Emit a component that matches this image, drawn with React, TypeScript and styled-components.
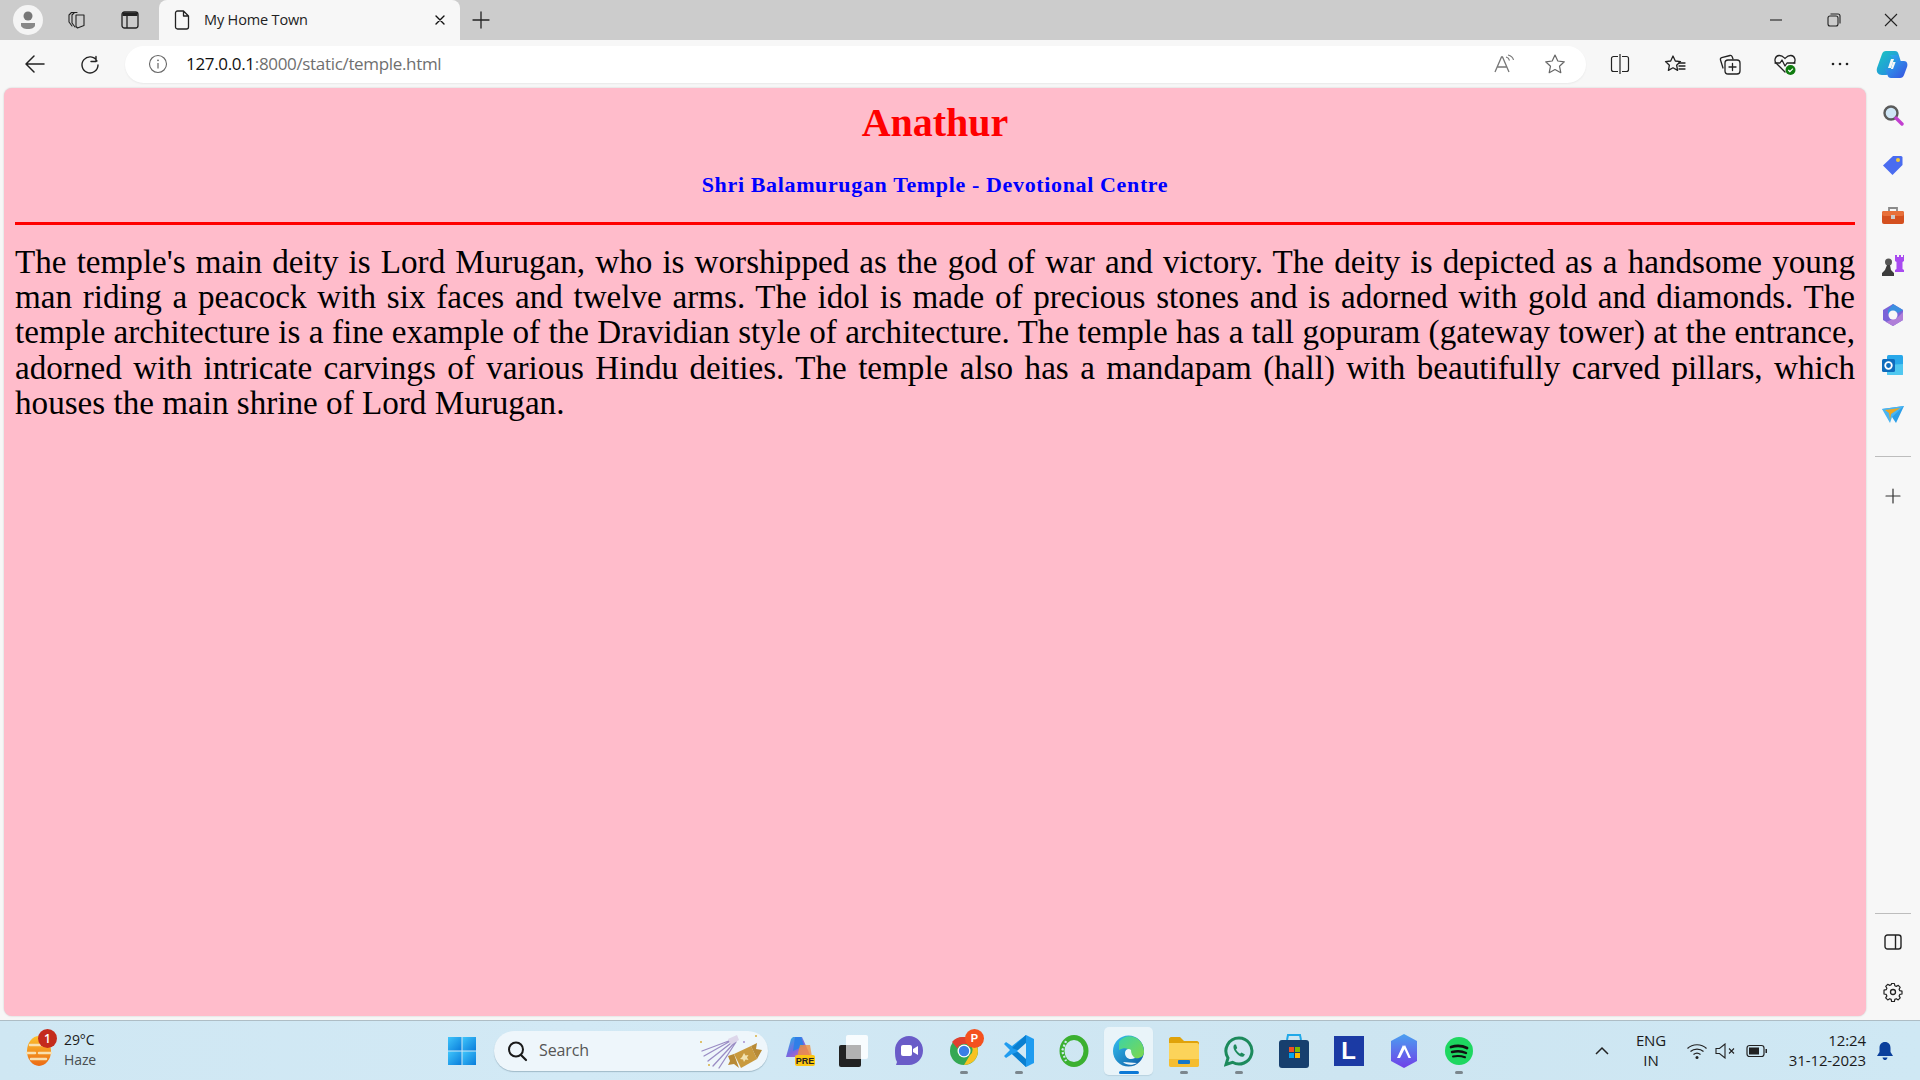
import React from "react";
import styled, { createGlobalStyle } from "styled-components";

const Global = createGlobalStyle`
  html, body { margin: 0; padding: 0; width: 1920px; height: 1080px; overflow: hidden; background: #f7f7f7; }
  #root { width: 1920px; height: 1080px; }
  * { box-sizing: border-box; }
`;
const UI = `"Open Sans", "Noto Sans", sans-serif`;

const Screen = styled.div`
  width: 1920px; height: 1080px; display: flex; flex-direction: column; font-family: ${UI}; color: #1b1b1b;
`;
const TabStrip = styled.div`
  height: 40px; background: #cccccc; display: flex; align-items: center; flex: none;
`;
const StripButton = styled.div<{ $w: number; $pl?: number }>`
  width: ${p => p.$w}px; height: 40px; padding-left: ${p => p.$pl ?? 0}px; display: flex; align-items: center; justify-content: center; flex: none;
`;
const Avatar = styled.div`
  width: 30px; height: 30px; border-radius: 50%; background: #f4f4f4; display: flex; align-items: center; justify-content: center;
`;
const Tab = styled.div`
  width: 301px; height: 40px; margin-left: 3px; background: #f7f7f7; border-radius: 8px 8px 0 0; display: flex; align-items: center;
  padding: 0 14px 0 15px; flex: none; font-size: 14.5px; letter-spacing: -0.15px;
`;
const TabTitle = styled.span`
  margin: 0 0 2px 14px; flex: 1; color: #222;
`;
const Spacer = styled.div`flex: 1;`;
const WindowButton = styled.div`
  width: 57.5px; height: 40px; display: flex; align-items: center; justify-content: center; flex: none;
`;
const ToolBar = styled.div`
  height: 48px; background: #f7f7f7; display: flex; align-items: center; flex: none; padding-left: 7px;
`;
const ToolButton = styled.div<{ $w?: number }>`
  width: ${p => p.$w ?? 55}px; height: 40px; display: flex; align-items: center; justify-content: center; flex: none;
`;
const AddressBar = styled.div`
  width: 1461px; height: 37px; margin-left: 8px; margin-right: 6px; background: #fff; border-radius: 19px; display: flex; align-items: center;
  padding: 0 6px 0 23px; box-shadow: 0 1px 2px rgba(0,0,0,.06); flex: none;
`;
const Url = styled.div`
  margin: 0 0 2px 18px; font-size: 17px; letter-spacing: -0.33px; color: #6f6f6f; flex: 1;
`;
const UrlHost = styled.span`color: #111;`;
const Middle = styled.div`
  flex: 1; display: flex; min-height: 0; padding-left: 4px;
`;
const Page = styled.main`
  width: 1862px; height: 928px; background: #ffbccb; border-radius: 8px; padding: 0 11px; flex: none; box-shadow: 0 0 2px rgba(0,0,0,.2);
  font-family: "Liberation Serif", "Times New Roman", serif; color: #000; overflow: hidden;
`;
const Heading = styled.h1`
  margin: 13px 0 0; font-size: 40px; line-height: 44px; font-weight: bold; color: #ff0000; text-align: center;
`;
const SubHeading = styled.h2`
  margin: 27px 0 0; font-size: 22px; line-height: 26px; font-weight: bold; color: #0000ff; text-align: center; letter-spacing: 0.64px;
`;
const Rule = styled.hr`
  margin: 24px 0 0; border: 0; height: 3px; background: #ff0000;
`;
const Body = styled.p`
  margin: 19px 0 0; font-size: 33.15px; line-height: 35.2px; text-align: justify;
`;
const SideBar = styled.aside`
  width: 54px; flex: none; display: flex; flex-direction: column; align-items: center; padding: 2px 1px 0 0; height: 929px;
`;
const SideItem = styled.div`
  width: 53px; height: 50px; display: flex; align-items: center; justify-content: center; flex: none;
`;
const SideRule = styled.div`
  width: 36px; height: 1px; background: #bdbdbd; flex: none; margin: 16px 0 31px;
`;
const SideFill = styled.div`flex: 1;`;
const SideRuleLow = styled(SideRule)`margin: 0 0 3px;`;
const TaskBar = styled.footer`
  height: 60px; flex: none; display: flex; align-items: center; position: relative;
  background: linear-gradient(90deg, #cfe7f3 0%, #d2e9f5 30%, #cde5f1 70%, #cfe8f4 100%);
  border-top: 1px solid #aebdc5;
`;
const Weather = styled.div`
  width: 434px; padding-left: 26px; display: flex; align-items: center; flex: none; position: relative; height: 40px;
`;
const Badge = styled.div`
  position: absolute; left: 38px; top: -2px; width: 19px; height: 19px; border-radius: 50%; background: #c42b1c; color: #fff; font-size: 12px;
  font-weight: 600; display: flex; align-items: center; justify-content: center;
`;
const WeatherText = styled.div`
  margin: 0 0 2px 12px; font-size: 14px; line-height: 20px; letter-spacing: -0.1px;
`;
const WeatherSub = styled.div`color: #4a4f52;`;
const StartButton = styled.div`
  width: 55px; height: 48px; display: flex; align-items: center; justify-content: center; flex: none;
`;
const SearchBox = styled.div`
  width: 274px; height: 40px; border-radius: 20px; background: #eef6fb; margin-left: 5px; display: flex; align-items: center; padding: 0 4px 0 12px;
  box-shadow: 0 1px 1px rgba(70,100,120,.35); flex: none; font-size: 16px; color: #555; letter-spacing: -0.1px;
`;
const SearchLabel = styled.span`margin: 0 0 1px 11px; flex: 1;`;
const Apps = styled.div`
  display: flex; align-items: center; margin-left: 3px; flex: none;
`;
const AppSlot = styled.div`
  width: 55px; height: 48px; display: flex; align-items: center; justify-content: center; position: relative; flex: none;
`;
const ActiveSlot = styled(AppSlot)`
  width: 49px; margin: 0 3px; border-radius: 5px; background: rgba(255,255,255,.55); box-shadow: 0 1px 1px rgba(70,100,120,.15);
`;
const AppDot = styled.div<{ $active?: boolean }>`
  position: absolute; bottom: 1px; left: 50%; transform: translateX(-50%); height: 3px; border-radius: 2px;
  width: ${p => (p.$active ? 20 : 8)}px; background: ${p => (p.$active ? "#0b78d6" : "#7b868d")};
`;
const AppBadge = styled.div`
  position: absolute; left: 29px; top: 2px; width: 19px; height: 19px; border-radius: 50%; background: #f4511e; color: #fff;
  font: bold 11px "Liberation Sans", sans-serif; display: flex; align-items: center; justify-content: center;
`;
const Tray = styled.div`
  margin-left: auto; display: flex; align-items: center; flex: none; height: 100%;
`;
const Chevron = styled.div`width: 24px; display: flex; justify-content: center; margin-right: 14px;`;
const Lang = styled.div`
  width: 46px; text-align: center; font-size: 15px; line-height: 20px; margin: 0 9px 2px 0; letter-spacing: -0.1px;
`;
const TrayIcon = styled.div<{ $w: number }>`
  width: ${p => p.$w}px; display: flex; justify-content: center; flex: none;
`;
const Clock = styled.div`
  margin: 0 0 2px 13px; text-align: right; font-size: 15px; line-height: 20px; width: 80px; letter-spacing: -0.1px; white-space: nowrap;
`;
const Bell = styled.div`width: 38px; display: flex; justify-content: center; margin-right: 16px;`;

const s = { fill: "none", stroke: "#222", strokeWidth: 1.3, strokeLinecap: "round" as const, strokeLinejoin: "round" as const };

const Ico = ({ w = 20, h = 20, vb, children }: { w?: number; h?: number; vb?: string; children: React.ReactNode }) => (
  <svg width={w} height={h} viewBox={vb ?? `0 0 ${w} ${h}`}>{children}</svg>
);

const gearPath = "M8.6 1.5h2.8l.4 2.2 1.5.7 2-1.1 1.9 2-1.1 1.9.7 1.5 2.2.5v2.8l-2.2.4-.7 1.5 1.1 2-2 2-1.9-1.2-1.5.7-.4 2.2H8.6l-.4-2.2-1.5-.7-2 1.2-2-2 1.2-2-.7-1.5-2.2-.4V8.200l2.2-.5.7-1.500-1.200-1.900 2-2 2 1.100 1.500-.7z";

function MiniSearch() {
  return <Ico w={22} h={22}><circle cx="9" cy="9" r="6.5" fill="#cfe6f6" stroke="#5b5b5b" strokeWidth="2.4" /><path d="M14 14l6 6" stroke="#c23fd0" strokeWidth="3.4" strokeLinecap="round" /></Ico>;
}
function MiniTag() {
  return <Ico w={22} h={22}><path d="M11 2h8a1.500 1.500 0 0 1 1.500 1.500V11L10.500 21 1 11.500z" fill="#4a6cf0" /><circle cx="16" cy="6" r="2" fill="#f3c93a" /></Ico>;
}
function MiniBox() {
  return <Ico w={24} h={20}><path d="M8 6V3h8v3" fill="none" stroke="#8a8a8a" strokeWidth="1.800" /><rect x="1" y="6" width="22" height="13" rx="2" fill="#d4501f" /><rect x="1" y="6" width="22" height="5" rx="2" fill="#e8703a" /><rect x="10" y="10" width="4" height="4" fill="#ccc" /></Ico>;
}
function MiniChess() {
  return <Ico w={24} h={24}><path d="M14 2h2v2h2V2h2v2h2V2h1v6l-1.500 1v7l1.500 1v2h-9v-2l1.500-1V9L14 8z" fill="#a84af0" /><circle cx="7.500" cy="9" r="3.500" fill="#555" /><path d="M6 12h3l1 5 3 3v3H1v-3l3-3z" fill="#3c3c3c" /></Ico>;
}
function MiniM365() {
  return <Ico w={22} h={24}><path d="M11 1l10 6v10l-10 6L1 17V7z" fill="#7a63d8" /><path d="M11 1l10 6-5 3-5-2-5 3V7z" fill="#3c8fe0" /><path d="M21 17l-10 6-7-4 7-3 5-2 5-5z" fill="#b07ed8" /><circle cx="11" cy="12" r="4.500" fill="#f7f7f7" /></Ico>;
}
function MiniOutlook() {
  return <Ico w={22} h={22}><rect x="5" y="1" width="16" height="20" rx="1.500" fill="#28a8ea" /><path d="M5 11l16-1v10a1 1 0 0 1-1 1H6a1 1 0 0 1-1-1z" fill="#50c8f0" /><rect x="0" y="5" width="13" height="13" rx="1.500" fill="#0f6cbd" /><circle cx="6.500" cy="11.500" r="3.300" fill="none" stroke="#fff" strokeWidth="1.800" /></Ico>;
}
function MiniSend() {
  return <Ico w={22} h={18}><path d="M0 3l22-3-8 17-4-6z" fill="#2c9fe8" /><path d="M0 3l22-3-12 11-2 6z" fill="#4ab5f2" /><path d="M3 4l15-2L9 8l-1 6-1-7z" fill="#eea620" /></Ico>;
}
function Copilot() {
  return <Ico w={32} h={30}><defs><linearGradient id="cpa" x1="0" y1="0" x2="1" y2="1"><stop offset="0" stopColor="#19c8c0" /><stop offset="1" stopColor="#2a7fe8" /></linearGradient><linearGradient id="cpb" x1="0" y1="0" x2="1" y2="1"><stop offset="0" stopColor="#26b8ee" /><stop offset="1" stopColor="#3a4fe0" /></linearGradient></defs><path d="M10 2h9c2 0 3 1 3.500 3L25 13h-8l-3 10c-.7 2-2 3-4 3H6C2 26 0 23 1 19L6 5c.7-2 2-3 4-3z" fill="url(#cpa)" /><path d="M14 6h8l2 6h4c3 0 4 3 3 6l-3 8c-.7 2-2 3-4 3h-9c-2 0-3-1-3.500-3L9 20h8l3-8z" fill="url(#cpb)" /><path d="M18 10l-3 9h-3l3-9z" fill="#f7f7f7" /></Ico>;
}
function Win11() {
  return <Ico w={28} h={28}><defs><linearGradient id="wa" x1="0" y1="0" x2="1" y2="1"><stop offset="0" stopColor="#3fc5fb" /><stop offset="1" stopColor="#0a7ddb" /></linearGradient></defs><rect x="0" y="0" width="13.500" height="13.500" fill="url(#wa)" /><rect x="14.500" y="0" width="13.500" height="13.500" fill="url(#wa)" /><rect x="0" y="14.500" width="13.500" height="13.500" fill="url(#wa)" /><rect x="14.500" y="14.500" width="13.500" height="13.500" fill="url(#wa)" /></Ico>;
}
function Popper() {
  return <Ico w={66} h={36}><g stroke="#9a8cc4" strokeWidth="1.300" strokeLinecap="round"><path d="M36 6L4 18M36 6L6 23M37 7L10 28M38 8L15 33M38 9L21 35" /></g><path d="M30 6l9-4 2 5-8 5z" fill="#ddd6ea" /><path d="M36 21l17-8 6 13-16 9z" fill="#c99a3e" /><path d="M53 13l6-3-1 6 6 1-5 9zM36 21l-6 2 2 5-2 4 6-1 5 4z" fill="#b88a35" /><path d="M46 20l1.500 2.500 3-.5-1.500 2.500 1.500 2.500-3-.5-1.500 2.500-1-2.500-3-.5 2-2z" fill="#f2e3b0" /><circle cx="3" cy="9" r="1" fill="#d8b040" /><circle cx="11" cy="32" r="1" fill="#d8b040" /><circle cx="46" cy="9" r="1" fill="#a78fd0" /><circle cx="58" cy="3" r="1" fill="#d8b040" /></Ico>;
}
function PreIcon() {
  return <Ico w={32} h={32}><defs><linearGradient id="pa" x1="0" y1="0" x2="1" y2="1"><stop offset="0" stopColor="#1fb6e8" /><stop offset=".5" stopColor="#7a66e0" /><stop offset="1" stopColor="#f26aa8" /></linearGradient></defs><path d="M10 2h9l9 20H3L8 4z" fill="url(#pa)" /><path d="M12 2h6l3 9-11 5z" fill="#2f7fe8" /><path d="M17 10h10l2 12H14z" fill="#f09040" opacity=".8" /><rect x="12" y="20" width="20" height="11" rx="2" fill="#fbc613" /><text x="22" y="29" textAnchor="middle" fontSize="9" fontWeight="700" fontFamily="Liberation Sans, sans-serif" fill="#222">PRE</text></Ico>;
}
function TaskView() {
  return <Ico w={30} h={32}><rect x="0" y="10" width="22" height="22" rx="2" fill="#222" /><rect x="7" y="0" width="22" height="24" rx="2" fill="#fff" opacity=".85" /><rect x="7" y="10" width="15" height="14" fill="#aaa" opacity=".85" /></Ico>;
}
function Meet() {
  return <Ico w={30} h={32}><path d="M15 1c8 0 14 6.500 14 14.500S23 30 15 30H2l1-3C1 24 1 19 1 15.500 1 7.500 7 1 15 1z" fill="#6a5cc8" /><rect x="7" y="10" width="11" height="11" rx="2" fill="#fff" /><path d="M19 14l5-3v9l-5-3z" fill="#fff" /></Ico>;
}
function Chrome() {
  return <Ico w={30} h={30}><circle cx="15" cy="15" r="14" fill="#34a853" /><path d="M15 1a14 14 0 0 1 12.100 7H15a7 7 0 0 0-6.500 4.500L3 6A14 14 0 0 1 15 1z" fill="#e0402f" /><path d="M27.100 8A14 14 0 0 1 15 29l6-10a7 7 0 0 0 0-11z" fill="#f8c223" /><circle cx="15" cy="15" r="6.500" fill="#fff" /><circle cx="15" cy="15" r="5.200" fill="#3a7ee6" /></Ico>;
}
function VsCode() {
  return <Ico w={30} h={32}><path d="M22 0l8 4v24l-8 4-14-13-6 4-2-2 6-6-6-6 2-2 6 4z" fill="#1f9cf0" /><path d="M22 0v32l-14-13 8-3-8-3z" fill="#0a7fd0" /><path d="M22 8v16l-9-8z" fill="#d2e9f5" /></Ico>;
}
function Ring() {
  return <Ico w={30} h={32}><ellipse cx="15" cy="16" rx="12" ry="13.500" fill="none" stroke="#3bb030" strokeWidth="5" /><path d="M7 6L3 16l4 10" fill="none" stroke="#d2e9f5" strokeWidth="2.200" strokeDasharray="2 2" /></Ico>;
}
function Edge() {
  return <Ico w={32} h={34}><defs><linearGradient id="ea" x1="0" y1="0" x2="1" y2="1"><stop offset="0" stopColor="#35c1f1" /><stop offset="1" stopColor="#0c59a4" /></linearGradient><linearGradient id="eb" x1="0" y1="0" x2="1" y2="1"><stop offset="0" stopColor="#3bd3a8" /><stop offset="1" stopColor="#7fd84a" /></linearGradient></defs><circle cx="15.500" cy="17" r="15.500" fill="url(#ea)" /><path d="M6 8C12-2 30 1 31 17c.3 6-5 8-9 7s-5-3-4-6c-2-4-7-5-12-2 0-3 0-6 0-8z" fill="url(#eb)" /><path d="M22 24c-6 3-10-1-10-5 0-4 4-5 6-3 0 3 1 6 4 8zM10 28c3 3 9 4 14 1-5 0-10-1-14-1z" fill="#eef6fb" /></Ico>;
}
function Folder() {
  return <Ico w={30} h={32}><path d="M0 4c0-1 1-2 2-2h9l4 4h13c1 0 2 1 2 2v4H0z" fill="#e0a20a" /><path d="M0 8h28c1 0 2 1 2 2v20c0 1-1 2-2 2H2c-1 0-2-1-2-2z" fill="#fcd35a" /><path d="M0 24h30v6c0 1-1 2-2 2H2c-1 0-2-1-2-2z" fill="#f5bd30" /><rect x="9" y="25" width="12" height="4" rx="1" fill="#1478c8" /></Ico>;
}
function WhatsApp() {
  return <Ico w={30} h={32}><path d="M15 3a13 13 0 1 1-6.500 24.300L2 29.500l2-6.500A13 13 0 0 1 15 3z" fill="none" stroke="#1c8a5c" strokeWidth="3" /><path d="M10.500 9.500c-1.500 1.500-1.500 4 1 7.500s6 5.500 8 4.500l1.500-2-3.500-2-1.500 1.200c-2-1-3-2.500-4-4.200l1.200-1.500-1.200-3.500z" fill="#1c8a5c" /></Ico>;
}
function Store() {
  return <Ico w={30} h={36}><path d="M8 7l1-5h12l1 5" fill="none" stroke="#20a8e8" strokeWidth="2" /><rect x="0" y="7" width="30" height="28" rx="3" fill="#173f6e" /><rect x="10" y="14" width="5" height="5" fill="#f25022" /><rect x="16" y="14" width="5" height="5" fill="#7fba00" /><rect x="10" y="20" width="5" height="5" fill="#00a4ef" /><rect x="16" y="20" width="5" height="5" fill="#ffb900" /></Ico>;
}
const LetterSquare = styled.div`
  width: 30px; height: 30px; background: #1b3aa4; color: #fff; font: bold 24px "Liberation Sans", sans-serif; display: flex; align-items: center; justify-content: center;
`;
function Hex() {
  return <Ico w={30} h={36}><defs><linearGradient id="ha" x1="0" y1="0" x2="0" y2="1"><stop offset="0" stopColor="#4aa0f0" /><stop offset="1" stopColor="#7040e8" /></linearGradient></defs><path d="M15 1l13 7v20l-13 7-13-7V8z" fill="url(#ha)" /><path d="M8 25l6-13 2 3-5 10zM16 12l6 13h-2.500L14.500 14" fill="#fff" /></Ico>;
}
function Spotify() {
  return <Ico w={30} h={32}><circle cx="15" cy="16" r="14" fill="#1ed760" /><g fill="none" stroke="#111" strokeLinecap="round"><path d="M7 12c5-1.500 11-1.500 16 1" strokeWidth="2.800" /><path d="M8 17c5-1.200 10-1 14 1" strokeWidth="2.400" /><path d="M9 21.500c4-1 8-.8 12 .8" strokeWidth="2" /></g></Ico>;
}

export default function App() {
  return (
    <Screen>
      <Global />
      <TabStrip>
        <StripButton $w={55}>
          <Avatar>
            <Ico w={16} h={20}><circle cx="8" cy="6" r="4.500" fill="#777" /><path d="M1 13h14v2c0 2.500-3 4-7 4s-7-1.500-7-4z" fill="#888" /></Ico>
          </Avatar>
        </StripButton>
        <StripButton $w={44}>
          <Ico w={20} h={20}><g {...s} strokeWidth={1.100}><path d="M7.500 2.500h-3L2 5v7l3 4" /><path d="M10 2.500H7.500L5 5v8l3 4" /><path d="M9 5l8 0v10.500L10.500 18l-1.500-1.500z" /></g></Ico>
        </StripButton>
        <StripButton $w={57} $pl={5}>
          <Ico w={18} h={18}><rect x="1" y="1" width="16" height="16" rx="2.500" fill="none" stroke="#222" strokeWidth="1.300" /><path d="M1.500 1.500h15v3.500h-15z" fill="#222" /><path d="M6 5v12" stroke="#222" strokeWidth="1.300" /></Ico>
        </StripButton>
        <Tab>
          <Ico w={16} h={20}><path d="M1.500 3c0-1 .8-2 2-2h6L14.500 6v11c0 1-.8 2-2 2h-9c-1.200 0-2-1-2-2z M9.500 1v5h5" fill="none" stroke="#222" strokeWidth="1.300" strokeLinejoin="round" /></Ico>
          <TabTitle>My Home Town</TabTitle>
          <Ico w={12} h={12}><path d="M2 2l8 8M10 2l-8 8" stroke="#111" strokeWidth="1.400" strokeLinecap="round" /></Ico>
        </Tab>
        <StripButton $w={42}>
          <Ico w={18} h={18}><path d="M9 1v16M1 9h16" stroke="#222" strokeWidth="1.300" strokeLinecap="round" /></Ico>
        </StripButton>
        <Spacer />
        <WindowButton><Ico w={14} h={14}><path d="M1 7h12" stroke="#222" strokeWidth="1.100" /></Ico></WindowButton>
        <WindowButton><Ico w={14} h={14}><rect x="1" y="3" width="10" height="10" rx="2" fill="none" stroke="#222" strokeWidth="1.100" /><path d="M3.500 1H11a2 2 0 0 1 2 2v7.500" fill="none" stroke="#222" strokeWidth="1.100" /></Ico></WindowButton>
        <WindowButton><Ico w={14} h={14}><path d="M1 1l12 12M13 1L1 13" stroke="#222" strokeWidth="1.100" /></Ico></WindowButton>
      </TabStrip>
      <ToolBar>
        <ToolButton>
          <Ico w={22} h={20}><path d="M20 10H2.500M10 2l-8 8 8 8" fill="none" stroke="#222" strokeWidth="1.500" strokeLinecap="round" strokeLinejoin="round" /></Ico>
        </ToolButton>
        <ToolButton>
          <Ico w={22} h={22}><path d="M17 3.500v5h-5M18 8a8 8 0 1 0 1 4" {...s} strokeWidth={1.400} /></Ico>
        </ToolButton>
        <AddressBar>
          <Ico w={20} h={20}><circle cx="10" cy="10" r="8.500" fill="none" stroke="#666" strokeWidth="1.100" /><path d="M10 9v5.500" stroke="#666" strokeWidth="1.200" /><circle cx="10" cy="6.300" r=".9" fill="#666" /></Ico>
          <Url><UrlHost>127.0.0.1</UrlHost>:8000/static/temple.html</Url>
          <ToolButton $w={50}>
            <Ico w={22} h={20}><path d="M1 18L7.500 3h1L15 18M3.500 13h9.500" fill="none" stroke="#777" strokeWidth="1.300" /><path d="M12 3c2 .5 3 1.500 3.500 3.500M14 1c3 .7 5 2.500 5.500 5" fill="none" stroke="#777" strokeWidth="1.100" /></Ico>
          </ToolButton>
          <ToolButton $w={50}>
            <Ico w={22} h={22}><path d="M11 2l2.800 6 6.500.8-4.800 4.400 1.300 6.500L11 16.500l-5.800 3.200 1.300-6.500L1.700 8.800 8.200 8z" fill="none" stroke="#666" strokeWidth="1.200" strokeLinejoin="round" /></Ico>
          </ToolButton>
        </AddressBar>
        <ToolButton>
          <Ico w={20} h={20}><path d="M8 2.500H3.500a2 2 0 0 0-2 2v11a2 2 0 0 0 2 2H8M12 2.500h4.500a2 2 0 0 1 2 2v11a2 2 0 0 1-2 2H12M10 0v20" fill="none" stroke="#222" strokeWidth="1.200" /></Ico>
        </ToolButton>
        <ToolButton>
          <Ico w={22} h={20}><path d="M9 2l2.300 5 5.200.6-3.900 3.600 1 5.200L9 13.800l-4.600 2.600 1-5.200L1.500 7.600 6.700 7z" {...s} /><path d="M15 9h6M15 12h6M15 15h6" {...s} /></Ico>
        </ToolButton>
        <ToolButton>
          <Ico w={22} h={22}><path d="M4 15L1.500 7c-.3-1 .2-2 1.200-2.300L11 2.500c1-.2 1.800.3 2.200 1.200L14 6" {...s} /><rect x="6" y="7" width="15" height="14" rx="3" {...s} /><path d="M13.500 10.500v7M10 14h7" {...s} /></Ico>
        </ToolButton>
        <ToolButton>
          <Ico w={24} h={24}><path d="M12 20L3 11c-2-2.500-1-7 3-7.500 3-.3 4.500 1.500 6 3 1.500-1.500 3-3.300 6-3 4 .5 5 5 3 7.500" {...s} /><path d="M2 11h5l2-3 3 6 2-3h8" {...s} /><circle cx="17.500" cy="18" r="5" fill="#107c10" /><path d="M15.300 18l1.600 1.600 3-3" fill="none" stroke="#fff" strokeWidth="1.300" /></Ico>
        </ToolButton>
        <ToolButton>
          <Ico w={18} h={4}><circle cx="2" cy="2" r="1.300" fill="#222" /><circle cx="9" cy="2" r="1.300" fill="#222" /><circle cx="16" cy="2" r="1.300" fill="#222" /></Ico>
        </ToolButton>
        <ToolButton $w={50}><Copilot /></ToolButton>
      </ToolBar>
      <Middle>
        <Page>
          <Heading>Anathur</Heading>
          <SubHeading>Shri Balamurugan Temple - Devotional Centre</SubHeading>
          <Rule />
          <Body>The temple's main deity is Lord Murugan, who is worshipped as the god of war and victory. The deity is depicted as a handsome young man riding a peacock with six faces and twelve arms. The idol is made of precious stones and is adorned with gold and diamonds. The temple architecture is a fine example of the Dravidian style of architecture. The temple has a tall gopuram (gateway tower) at the entrance, adorned with intricate carvings of various Hindu deities. The temple also has a mandapam (hall) with beautifully carved pillars, which houses the main shrine of Lord Murugan.</Body>
        </Page>
        <SideBar>
          <SideItem><MiniSearch /></SideItem>
          <SideItem><MiniTag /></SideItem>
          <SideItem><MiniBox /></SideItem>
          <SideItem><MiniChess /></SideItem>
          <SideItem><MiniM365 /></SideItem>
          <SideItem><MiniOutlook /></SideItem>
          <SideItem><MiniSend /></SideItem>
          <SideRule />
          <Ico w={16} h={16}><path d="M8 1v14M1 8h14" stroke="#333" strokeWidth="1.200" strokeLinecap="round" /></Ico>
          <SideFill />
          <SideRuleLow />
          <SideItem><Ico w={18} h={16}><rect x="1" y="1" width="16" height="14" rx="2.500" fill="none" stroke="#222" strokeWidth="1.400" /><path d="M11.500 1v14" stroke="#222" strokeWidth="1.400" /></Ico></SideItem>
          <SideItem><Ico w={20} h={20}><circle cx="10" cy="10" r="2.500" fill="none" stroke="#222" strokeWidth="1.300" /><path d={gearPath} fill="none" stroke="#222" strokeWidth="1.200" strokeLinejoin="round" /></Ico></SideItem>
        </SideBar>
      </Middle>
      <TaskBar>
        <Weather>
          <Ico w={26} h={34}><defs><linearGradient id="su" x1="0" y1="0" x2="0" y2="1"><stop offset="0" stopColor="#fbc02d" /><stop offset="1" stopColor="#ec6a14" /></linearGradient></defs><ellipse cx="13" cy="17" rx="12" ry="15" fill="url(#su)" /><path d="M4 11h14M1 19h8M13 19h12M5 25h15" stroke="#f8e0b0" strokeWidth="2.500" strokeLinecap="round" /></Ico>
          <Badge>1</Badge>
          <WeatherText>29°C<WeatherSub>Haze</WeatherSub></WeatherText>
        </Weather>
        <StartButton><Win11 /></StartButton>
        <SearchBox>
          <Ico w={22} h={22}><circle cx="10" cy="9.500" r="7" fill="none" stroke="#1a1a1a" strokeWidth="2" /><path d="M15 15l5 5" stroke="#1a1a1a" strokeWidth="2.200" strokeLinecap="round" /></Ico>
          <SearchLabel>Search</SearchLabel>
          <Popper />
        </SearchBox>
        <Apps>
          <AppSlot><PreIcon /></AppSlot>
          <AppSlot><TaskView /></AppSlot>
          <AppSlot><Meet /></AppSlot>
          <AppSlot>
            <Chrome />
            <AppBadge>P</AppBadge>
            <AppDot />
          </AppSlot>
          <AppSlot><VsCode /><AppDot /></AppSlot>
          <AppSlot><Ring /></AppSlot>
          <ActiveSlot><Edge /><AppDot $active /></ActiveSlot>
          <AppSlot><Folder /><AppDot /></AppSlot>
          <AppSlot><WhatsApp /><AppDot /></AppSlot>
          <AppSlot><Store /></AppSlot>
          <AppSlot><LetterSquare>L</LetterSquare></AppSlot>
          <AppSlot><Hex /></AppSlot>
          <AppSlot><Spotify /><AppDot /></AppSlot>
        </Apps>
        <Tray>
          <Chevron><Ico w={16} h={10}><path d="M2 8l6-6 6 6" fill="none" stroke="#222" strokeWidth="1.500" /></Ico></Chevron>
          <Lang>ENG<br />IN</Lang>
          <TrayIcon $w={28}><Ico w={22} h={18}><path d="M1.500 6.500c5-5 14-5 19 0M4.500 9.500c3.500-3.300 9.500-3.300 13 0M7.500 12.500c2-1.700 5-1.700 7 0" fill="none" stroke="#222" strokeWidth="1.200" /><circle cx="11" cy="15.500" r="1.500" fill="#222" /></Ico></TrayIcon>
          <TrayIcon $w={30}><Ico w={22} h={16}><path d="M1 5.500h3.500L10 1v14l-5.500-4.500H1z" fill="none" stroke="#222" strokeWidth="1.100" /><path d="M14 5.500l5 5M19 5.500l-5 5" stroke="#222" strokeWidth="1.100" /></Ico></TrayIcon>
          <TrayIcon $w={32}><Ico w={22} h={14}><rect x="1" y="1.500" width="17" height="11" rx="2.500" fill="none" stroke="#222" strokeWidth="1.200" /><rect x="3" y="3.500" width="10" height="7" fill="#222" /><path d="M19.500 5h1.500v4h-1.500z" fill="#222" /></Ico></TrayIcon>
          <Clock>12:24<br />31-12-2023</Clock>
          <Bell><Ico w={18} h={20}><path d="M9 1c3.500 0 5.500 2.500 5.500 6v4l2.500 4H1l2.500-4V7c0-3.500 2-6 5.500-6z" fill="#0a3f9c" /><path d="M6.500 16.500h5C11 18.500 10 19 9 19s-2-.5-2.500-2.500z" fill="#0a3f9c" /></Ico></Bell>
        </Tray>
      </TaskBar>
    </Screen>
  );
}
